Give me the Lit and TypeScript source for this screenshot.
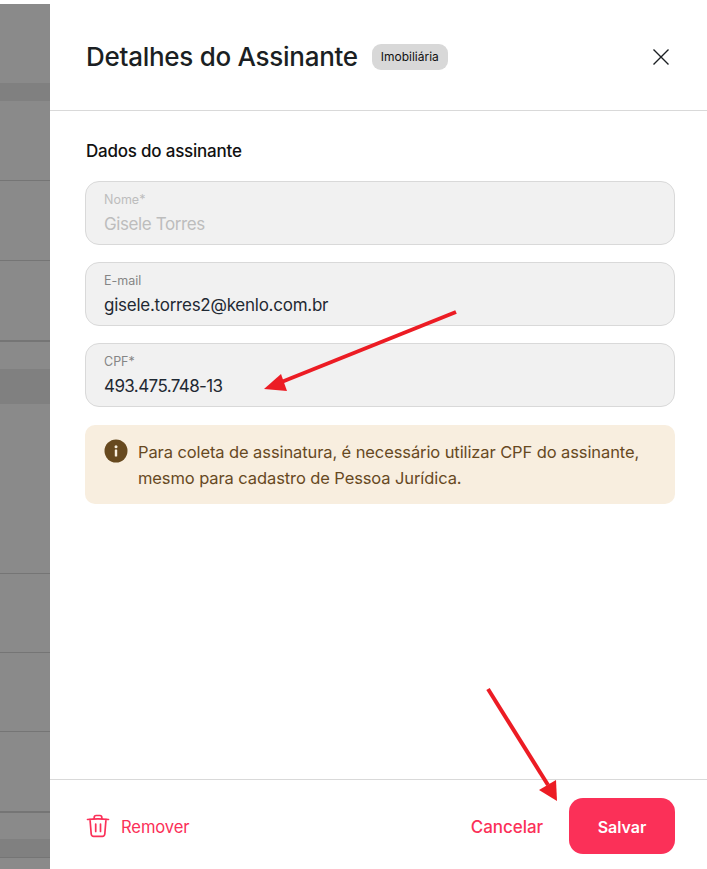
import { LitElement, html, css } from "lit";
import { customElement } from "lit/decorators.js";

const bands = [
  { h: 79, c: "base" }, { h: 18, c: "dark" }, { h: 79, c: "base" }, { h: 1, c: "line" },
  { h: 79, c: "base" }, { h: 1, c: "line" }, { h: 79, c: "base" }, { h: 2, c: "line" },
  { h: 27, c: "base" }, { h: 35, c: "dark" }, { h: 169, c: "base" }, { h: 1, c: "line" },
  { h: 78, c: "base" }, { h: 1, c: "line" }, { h: 78, c: "base" }, { h: 1, c: "line" },
  { h: 79, c: "base" }, { h: 2, c: "line" }, { h: 26, c: "base" }, { h: 18, c: "dark" },
  { h: 1, c: "line" }, { h: 11, c: "base" },
];

@customElement("app-root")
export class AppRoot extends LitElement {
  static styles = css`
    :host { display: block; width: 707px; height: 869px; position: relative; overflow: hidden; background: #fff;
      font-family: "Inter", "Noto Sans", sans-serif; color: #1b1f23; }
    .page { display: flex; height: 869px; }
    .scrim { width: 50px; flex: none; padding-top: 4px; display: flex; flex-direction: column; box-sizing: border-box; }
    .base { background: #8a8a8a; }
    .dark { background: #808080; }
    .line { background: #757575; }
    .panel { flex: 1; display: flex; flex-direction: column; min-width: 0; }
    header { height: 111px; flex: none; box-sizing: border-box; border-bottom: 1px solid #d9d9d9; display: flex; align-items: center; padding: 3px 36px 0; gap: 14px; }
    h1 { margin: 0; font-size: 26px; line-height: 32px; font-weight: 500; letter-spacing: -0.28px; white-space: nowrap; }
    .chip { background: #d8d8d8; border-radius: 9px; height: 26px; width: 76px; display: flex; align-items: center; justify-content: center; font-size: 12px; color: #111; letter-spacing: 0; }
    .close { margin-left: auto; width: 18px; height: 18px; display: block; margin-right: 1px; }
    .body { flex: 1; padding: 30px 32px 0 35px; min-height: 0; }
    h2 { margin: 0 0 20px 1px; font-size: 17px; line-height: 20px; font-weight: 500; color: #111; letter-spacing: -0.22px; }
    .field { height: 64px; box-sizing: border-box; background: #f1f1f1; border: 1px solid #d9d9d9; border-radius: 14px; padding: 10px 18px 0; margin-bottom: 17px; }
    .field label { display: block; font-size: 12.5px; line-height: 16px; color: #858585; }
    .field .v { font-size: 17px; line-height: 24px; margin-top: 4px; color: #1f2933; letter-spacing: -0.25px; }
    .field .name { letter-spacing: -0.4px; }
    .field .cpf { letter-spacing: -0.6px; }
    .field.off label, .field.off .v { color: #bdbdbd; }
    .alert { margin-top: 18px; height: 79px; box-sizing: border-box; background: #f8eedf; border-radius: 10px; display: flex; gap: 10px; padding: 14px 20px 0 19px; color: #67491f; font-size: 16.5px; line-height: 26px; letter-spacing: -0.1px; }
    .alert svg { width: 24px; height: 24px; flex: none; }
    footer { height: 90px; flex: none; box-sizing: border-box; border-top: 1px solid #d9d9d9; display: flex; align-items: center; padding: 3px 32px 0 36px; }
    .rm { display: flex; align-items: center; gap: 11px; color: #fb3058; font-size: 16.6px; letter-spacing: -0.1px; }
    .rm span { padding-top: 2px; }
    .rm svg { width: 24px; height: 24px; display: block; }
    .cancel { margin-left: auto; margin-right: 26px; padding-top: 2px; color: #fb3058; font-size: 17px; letter-spacing: -0.06px; font-weight: 500; }
    .save { width: 106px; height: 56px; box-sizing: border-box; padding-top: 2px; border-radius: 14px; background: #fb3058; color: #fff; font-size: 16px; font-weight: 600; display: flex; align-items: center; justify-content: center; }
    .arrows { position: absolute; inset: 0; width: 707px; height: 869px; pointer-events: none; }
  `;

  render() {
    return html`
      <div class="page">
        <div class="scrim">${bands.map((b) => html`<div class=${b.c} style="height:${b.h}px"></div>`)}</div>
        <div class="panel">
          <header>
            <h1>Detalhes do Assinante</h1>
            <span class="chip">Imobiliária</span>
            <svg class="close" viewBox="0 0 18 18" fill="none" stroke="#1b1f23" stroke-width="1.4"><path d="M1.5 1.5l15 15M16.5 1.5l-15 15"/></svg>
          </header>
          <div class="body">
            <h2>Dados do assinante</h2>
            <div class="field off"><label>Nome*</label><div class="v name">Gisele Torres</div></div>
            <div class="field"><label>E-mail</label><div class="v">gisele.torres2@kenlo.com.br</div></div>
            <div class="field"><label>CPF*</label><div class="v cpf">493.475.748-13</div></div>
            <div class="alert">
              <svg viewBox="0 0 24 24"><circle cx="12" cy="12" r="11.5" fill="#67491f"/><rect x="10.8" y="10.5" width="2.4" height="7" rx=".6" fill="#f8eedf"/><circle cx="12" cy="7.8" r="1.5" fill="#f8eedf"/></svg>
              <div>Para coleta de assinatura, é necessário utilizar CPF do assinante, mesmo para cadastro de Pessoa Jurídica.</div>
            </div>
          </div>
          <footer>
            <div class="rm">
              <svg viewBox="0 0 24 24" fill="none" stroke="#fb3058" stroke-width="1.7" stroke-linecap="round" stroke-linejoin="round"><path d="M1.5 5.5C8 4.8 16 4.8 22.5 5.5M8.2 5V3.4A1.9 1.9 0 0 1 10.1 1.5h3.8a1.9 1.9 0 0 1 1.9 1.9V5M4 5.3l1.2 14.7a2.5 2.5 0 0 0 2.5 2.3h8.6a2.5 2.5 0 0 0 2.5-2.3L20 5.3M9.7 10v7.5M14.5 10v7.5"/></svg>
              <span>Remover</span>
            </div>
            <span class="cancel">Cancelar</span>
            <div class="save">Salvar</div>
          </footer>
        </div>
      </div>
      <svg class="arrows" viewBox="0 0 707 869" fill="#ec1c24" stroke="none">
        <path d="M456 312L279 383" stroke="#ec1c24" stroke-width="4"/>
        <path d="M264 389L281 374L287 391Z"/>
        <path d="M488 689L548 785" stroke="#ec1c24" stroke-width="4"/>
        <path d="M557 801L539 790L556 780Z"/>
      </svg>
    `;
  }
}
